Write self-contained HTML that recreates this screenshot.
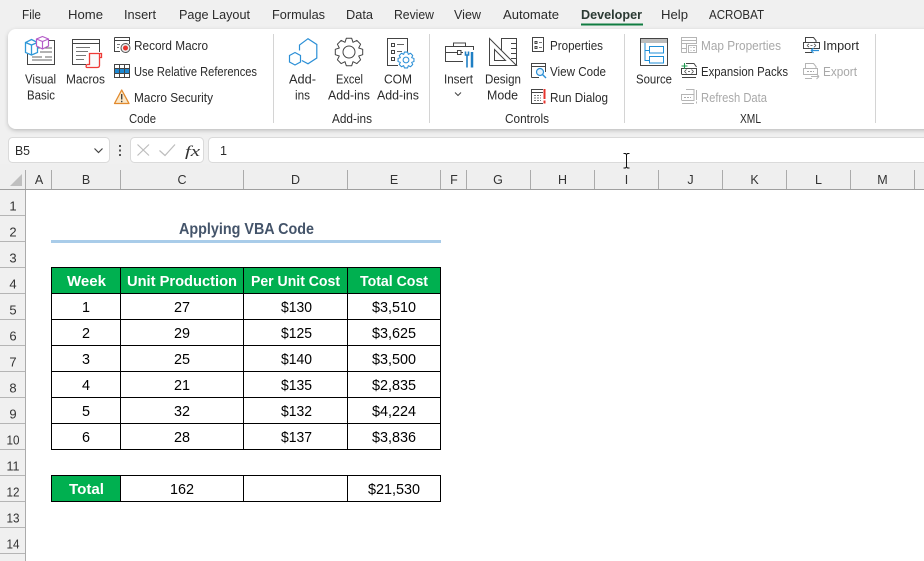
<!DOCTYPE html>
<html><head><meta charset="utf-8"><style>
html,body{margin:0;padding:0;background:#f0f0f0;width:924px;height:561px;overflow:hidden}
svg{display:block}
text{font-family:"Liberation Sans",sans-serif;font-size:12.5px;fill:#2b2b2b}
.g{fill:#a8a8a8}
.h{font-size:12.5px;fill:#333;text-anchor:middle}
.r{font-size:13px;fill:#333;text-anchor:middle}
.t{font-size:15px;fill:#000}
.b{font-size:14.5px;font-weight:bold;fill:#fff}
.i{fill:none;stroke:#444;stroke-width:1}
.l{fill:none;stroke:#444;stroke-width:1}
.bl{fill:none;stroke:#2b8fd6;stroke-width:1.2}
.gr{fill:none;stroke:#b5b5b5;stroke-width:1}
</style></head><body>
<svg width="924" height="561" viewBox="0 0 924 561" xmlns="http://www.w3.org/2000/svg">
<defs><filter id="s" x="-2%" y="-10%" width="104%" height="125%"><feDropShadow dx="0" dy="1.5" stdDeviation="2" flood-color="#000" flood-opacity=".22"/></filter></defs>
<rect width="924" height="561" fill="#f0f0f0"/>

<!-- tabs -->
<g>
<text x="22" y="19" textLength="19" lengthAdjust="spacingAndGlyphs">File</text>
<text x="68" y="19" textLength="35" lengthAdjust="spacingAndGlyphs">Home</text>
<text x="124" y="19" textLength="32" lengthAdjust="spacingAndGlyphs">Insert</text>
<text x="179" y="19" textLength="71" lengthAdjust="spacingAndGlyphs">Page Layout</text>
<text x="272" y="19" textLength="53" lengthAdjust="spacingAndGlyphs">Formulas</text>
<text x="346" y="19" textLength="27" lengthAdjust="spacingAndGlyphs">Data</text>
<text x="394" y="19" textLength="40" lengthAdjust="spacingAndGlyphs">Review</text>
<text x="454" y="19" textLength="27" lengthAdjust="spacingAndGlyphs">View</text>
<text x="503" y="19" textLength="56" lengthAdjust="spacingAndGlyphs">Automate</text>
<text x="581" y="19" textLength="61" lengthAdjust="spacingAndGlyphs" style="font-weight:bold;fill:#2b3a33">Developer</text>
<text x="661" y="19" textLength="27" lengthAdjust="spacingAndGlyphs">Help</text>
<text x="709" y="19" textLength="55" lengthAdjust="spacingAndGlyphs">ACROBAT</text>
</g>
<rect x="581" y="23.5" width="62" height="2" fill="#107c41"/>

<!-- ribbon -->
<path d="M934 29H16a8 8 0 0 0-8 8v84a8 8 0 0 0 8 8H934z" fill="#fff" filter="url(#s)"/>
<g fill="#d4d4d4">
<rect x="273" y="34" width="1" height="89"/><rect x="429" y="34" width="1" height="89"/><rect x="624" y="34" width="1" height="89"/><rect x="875" y="34" width="1" height="89"/>
</g>

<!-- Ribbon labels -->
<text x="25" y="83.500" textLength="31" lengthAdjust="spacingAndGlyphs">Visual</text>
<text x="27" y="99.500" textLength="28" lengthAdjust="spacingAndGlyphs">Basic</text>
<text x="66" y="83.500" textLength="39" lengthAdjust="spacingAndGlyphs">Macros</text>
<text x="134" y="50" textLength="74" lengthAdjust="spacingAndGlyphs">Record Macro</text>
<text x="134" y="76" textLength="123" lengthAdjust="spacingAndGlyphs">Use Relative References</text>
<text x="134" y="102" textLength="79" lengthAdjust="spacingAndGlyphs">Macro Security</text>
<text x="129" y="123" textLength="27" lengthAdjust="spacingAndGlyphs">Code</text>
<text x="289" y="83.500" textLength="27" lengthAdjust="spacingAndGlyphs">Add-</text>
<text x="295" y="99.500" textLength="15" lengthAdjust="spacingAndGlyphs">ins</text>
<text x="336" y="83.500" textLength="27" lengthAdjust="spacingAndGlyphs">Excel</text>
<text x="328" y="99.500" textLength="42" lengthAdjust="spacingAndGlyphs">Add-ins</text>
<text x="384" y="83.500" textLength="28" lengthAdjust="spacingAndGlyphs">COM</text>
<text x="377" y="99.500" textLength="42" lengthAdjust="spacingAndGlyphs">Add-ins</text>
<text x="332" y="123" textLength="40" lengthAdjust="spacingAndGlyphs">Add-ins</text>
<text x="444" y="83.500" textLength="29" lengthAdjust="spacingAndGlyphs">Insert</text>
<text x="485" y="83.500" textLength="36" lengthAdjust="spacingAndGlyphs">Design</text>
<text x="487" y="99.500" textLength="31" lengthAdjust="spacingAndGlyphs">Mode</text>
<text x="550" y="50" textLength="53" lengthAdjust="spacingAndGlyphs">Properties</text>
<text x="550" y="76" textLength="56" lengthAdjust="spacingAndGlyphs">View Code</text>
<text x="550" y="102" textLength="58" lengthAdjust="spacingAndGlyphs">Run Dialog</text>
<text x="505" y="123" textLength="44" lengthAdjust="spacingAndGlyphs">Controls</text>
<text x="636" y="83.500" textLength="36" lengthAdjust="spacingAndGlyphs">Source</text>
<text class="g" x="701" y="50" textLength="80" lengthAdjust="spacingAndGlyphs">Map Properties</text>
<text x="701" y="76" textLength="87" lengthAdjust="spacingAndGlyphs">Expansion Packs</text>
<text class="g" x="701" y="102" textLength="66" lengthAdjust="spacingAndGlyphs">Refresh Data</text>
<text x="823" y="50" textLength="36" lengthAdjust="spacingAndGlyphs">Import</text>
<text class="g" x="823" y="76" textLength="34" lengthAdjust="spacingAndGlyphs">Export</text>
<text x="740" y="123" textLength="21" lengthAdjust="spacingAndGlyphs">XML</text>

<!-- Visual Basic icon -->
<path class="l" d="M44.500 40.500H54.500V64.500H27.500V54" />
<path d="M38 48H52M40 52H52M32 57H42M45 57H52M32 60H52" stroke="#666" stroke-width="1" fill="none"/>
<g fill="#fff" stroke="#2f98d8" stroke-width="1.3"><path d="M31.500 39.500L37.500 42.500V52.500L31.500 55L25.500 52.500V42.500Z"/><path fill="none" d="M25.500 42.500L31.500 45L37.500 42.500M31.500 45V55"/></g>
<g fill="#fff" stroke="#b45cc8" stroke-width="1.2"><path d="M42.500 36.500L48.500 39V46L42.500 49L36.500 46V39Z"/><path fill="none" d="M36.500 39L42.500 41.500L48.500 39M42.500 41.500V49"/></g>

<!-- Macros icon -->
<path class="l" d="M86 64.500H72.500V39.500H99.500V52M72.500 43.500H99.500"/>
<path d="M76 47.500H90M76 51.500H88M76 55.500H86M76 59.500H84" stroke="#777" fill="none"/>
<path d="M89.500 53.500H99.500V65.500C99.500 67 98.500 67.500 97 67.500H87C85.500 67.500 86 64.500 87.500 64.500H89.500ZM99.500 53.500H101.500V57.500H99.500" fill="#fafafa" stroke="#ee3a36" stroke-width="1.3"/>

<!-- Record macro -->
<path class="l" d="M114.500 37.500H129.500V44M114.500 40.500H129.500M114.500 37.500V51.500H120"/>
<path d="M117 44.500H120M117 47.500H119" stroke="#777"/>
<circle cx="125.500" cy="48" r="4.500" fill="#eee" stroke="#555"/>
<circle cx="125.500" cy="48" r="2.500" fill="#e8352e"/>

<!-- Relative references -->
<rect x="114.500" y="64.500" width="15" height="13" fill="#fff" stroke="#444"/>
<rect x="115" y="68.500" width="14" height="4.500" fill="#1e88d0"/>
<path d="M114.500 68.500H129.500M114.500 73.500H129.500M119.500 64.500V77.500M124.500 64.500V77.500" stroke="#444" fill="none"/>

<!-- Warning -->
<path d="M121.700 90L129 103.500H114.500Z" fill="#fbe8c8" stroke="#e28a2e" stroke-width="1.3" stroke-linejoin="round"/>
<path d="M121.700 94V99.500M121.700 100.700V102.300" stroke="#444" stroke-width="1.4"/>

<!-- Add-ins -->
<path d="M299.500 50.500V45L308 38.700L316.800 44.500V58L308 63.800L301.800 60.500" fill="none" stroke="#2b8fd6" stroke-width="1.2"/>
<path d="M295 52.500L300.500 55.500V62L295 65L289.500 62V55.500Z" fill="none" stroke="#2b8fd6" stroke-width="1.2"/>

<!-- Gear -->
<g transform="translate(349 52)"><polygon class="l" stroke-linejoin="round" points="13.700,-2.700 13.700,2.700 9.700,4 11.600,7.800 7.800,11.600 4,9.700 2.700,13.700 -2.700,13.700 -4,9.700 -7.800,11.600 -11.600,7.800 -9.700,4 -13.700,2.700 -13.700,-2.700 -9.700,-4 -11.600,-7.800 -7.800,-11.600 -4,-9.700 -2.700,-13.700 2.700,-13.700 4,-9.700 7.800,-11.600 11.600,-7.800 9.700,-4"/><circle r="6" class="l"/></g>

<!-- COM -->
<path class="l" d="M398 65.500H387.500V38.500H407.500V52"/>
<path d="M391.500 43.500h3v3h-3zM391.500 50.500h3v3h-3zM391.500 57.500h3v3h-3z" class="l" stroke="#666"/>
<path d="M397 44.500H404M397 51.500H402" stroke="#666" fill="none"/>
<g transform="translate(406 60) scale(.58)"><polygon fill="#fff" stroke="#2b8fd6" stroke-width="1.8" stroke-linejoin="round" points="13.700,-2.700 13.700,2.700 9.700,4 11.600,7.800 7.800,11.600 4,9.700 2.700,13.700 -2.700,13.700 -4,9.700 -7.800,11.600 -11.600,7.800 -9.700,4 -13.700,2.700 -13.700,-2.700 -9.700,-4 -11.600,-7.800 -7.800,-11.600 -4,-9.700 -2.700,-13.700 2.700,-13.700 4,-9.700 7.800,-11.600 11.600,-7.800 9.700,-4"/><circle r="5" fill="none" stroke="#2b8fd6" stroke-width="1.8"/></g>

<!-- Insert toolbox -->
<path class="l" d="M463 61.500H445.500V46.500H473.500V50M445.500 52.500H457M461 52.500H463M453.500 46.500V43H465.500V46.500"/>
<rect x="457.500" y="50.500" width="3.500" height="4" class="l"/>
<path d="M465.500 51.500V55H468.500V51.500M467 55V67.500" stroke="#1f7fc4" stroke-width="1.6" fill="none"/>
<path d="M472 52V67.500" stroke="#1f7fc4" stroke-width="2.500" fill="none"/>
<path d="M455 92.500L458 95.500L461 92.500" fill="none" stroke="#444"/>

<!-- Design mode -->
<path class="l" stroke-width="1.2" d="M489.500 38.500L516.500 65.500H489.500ZM494.500 60.500H505.500L494.500 49.500Z"/>
<path class="l" d="M501.500 50V38.500H516.500V65M511 43.500H516.500M511 48.500H516.500M511 53.500H516.500M511 58.500H516.500"/>

<!-- Properties -->
<rect x="532.500" y="37.500" width="11" height="14" fill="#fff" stroke="#444"/>
<path d="M535 41.500h2v2h-2zM535 46.500h2v2h-2z" class="l" stroke="#777"/><path d="M539 42.500h3M539 47.500h3" stroke="#777"/>

<!-- View Code -->
<path class="l" d="M531.500 77.500V63.500H545.500V72M531.500 66.500H545.500M531.500 77.500H539"/>
<circle cx="540" cy="72" r="3.500" fill="#e6f3fc" stroke="#2b8fd6" stroke-width="1.200"/>
<path d="M542.500 74.500L546 78" stroke="#2b8fd6" stroke-width="1.400"/>

<!-- Run Dialog -->
<path class="l" d="M543 103.500H531.500V89.500H543M531.500 92.500H543"/>
<path d="M534 95.500H541M534 98H541M534 100.500H541" stroke="#777" stroke-dasharray="2 1"/>
<path d="M544.500 89V99M544.500 100.500V103.500" stroke="#e8352e" stroke-width="2"/>

<!-- Source -->
<rect x="640.500" y="38.500" width="27" height="27" fill="#fff" stroke="#444"/>
<rect x="641" y="39" width="26" height="4" fill="#bdbdbd"/>
<path d="M645 43V60.500H649M645 50.500H649" fill="none" stroke="#1f8fd8"/>
<rect x="649.500" y="46.500" width="14" height="6.500" fill="none" stroke="#1f8fd8"/>
<rect x="649.500" y="56.500" width="14" height="6.500" fill="none" stroke="#1f8fd8"/>

<!-- Map props -->
<path class="gr" d="M681.500 52.500V37.500H696.500V43.500H681.500M681.500 40.500H696.500M686.500 43.500V52.500H681.500M681.500 48.500H686.500M691 43.500V44"/>
<rect x="688.500" y="45.500" width="8" height="7" class="gr"/>
<path d="M690.500 47.500h1M693 47.500h2M690.500 50.500h1M693 50.500h2" stroke="#bbb"/>

<!-- Expansion -->
<path class="l" d="M686 63.500H694L696.500 67M681.500 74V68.500H696.500V74.500H681.500M682 77.500H696"/>
<path d="M684.500 71.500L686.500 69.500M684.500 71.500L686.500 73.500M693.500 71.500L691.500 69.500M693.500 71.500L691.500 73.500M688 71.500H690" stroke="#444" fill="none" stroke-width=".8"/>
<path d="M684.500 63V69M681.500 66H687.500" stroke="#1f9a50" stroke-width="1.100"/>

<!-- Refresh data -->
<path class="gr" d="M686 89.500H694V94M681.500 100V94.500H694V100.500H681.500M682 103.500H694M696.500 90V100M696.500 101.500V103.500"/>
<path d="M684 97.500h7" stroke="#aaa" stroke-dasharray="2 1"/>

<!-- Import -->
<path class="l" d="M805.500 42V37.500H813.500L816 40.500V42M803.500 42.500H819.500V48.500H803.500ZM805 52.500H812"/>
<path d="M807 45.500L809 43.800M807 45.500L809 47.200M816 45.500L814 43.800M816 45.500L814 47.200M810.500 45.500H812.500" stroke="#444" fill="none" stroke-width=".8"/>
<path d="M811 50.500H819M811 50.500L813.500 48M811 50.500L813.500 53" stroke="#2b8fd6" stroke-width="1.200" fill="none"/>

<!-- Export -->
<path class="gr" d="M805.500 68V63.500H813.500L816 66.500V68M803.500 68.500H817.500V74.500H803.500ZM805 78.500H812"/>
<path d="M807 71.500h7" stroke="#aaa" stroke-dasharray="2 1"/>
<path d="M811 76.500H819M819 76.500L816.500 74M819 76.500L816.500 79" stroke="#b5b5b5" fill="none"/>

<!-- Formula bar -->
<rect x="8.500" y="137.500" width="101" height="25" rx="4" fill="#fff" stroke="#dadada"/>
<text x="15" y="155" textLength="15" lengthAdjust="spacingAndGlyphs" style="font-size:13px">B5</text>
<path d="M94.500 148.500L98.500 152.500L102.500 148.500" fill="none" stroke="#444" stroke-width="1.200"/>
<g fill="#555"><rect x="119" y="145" width="2" height="2"/><rect x="119" y="149.500" width="2" height="2"/><rect x="119" y="154" width="2" height="2"/></g>
<rect x="130.500" y="137.500" width="73" height="25" rx="4" fill="#fff" stroke="#dadada"/>
<path d="M137.500 144.500L149 155.500M149 144.500L137.500 155.500" stroke="#bdbdbd" stroke-width="1.200" fill="none"/>
<path d="M159.500 150.500L165 155.500L175 144.500" stroke="#bdbdbd" stroke-width="1.200" fill="none"/>
<text x="185" y="156" textLength="15" lengthAdjust="spacingAndGlyphs" style="font-family:'Liberation Serif',serif;font-style:italic;font-size:15px;fill:#333">fx</text>
<rect x="208.500" y="137.500" width="730" height="25" rx="4" fill="#fff" stroke="#dadada"/>
<text x="220" y="155" textLength="7" lengthAdjust="spacingAndGlyphs" style="font-size:13px">1</text>

<!-- Grid area -->
<rect x="0" y="163.500" width="924" height="26" fill="#efefef"/>
<rect x="26" y="190" width="898" height="371" fill="#fff"/>
<path d="M22 174V186H10Z" fill="#bfbfbf"/>
<path d="M25.500 170V561M51.500 170V189M120.500 170V189M243.500 170V189M347.500 170V189M440.500 170V189M466.500 170V189M530.500 170V189M594.500 170V189M658.500 170V189M722.500 170V189M786.500 170V189M850.500 170V189M914.500 170V189" stroke="#ababab" fill="none"/>
<path d="M0 189.500H924" stroke="#9f9f9f" fill="none"/>
<path d="M0 215.500H25M0 241.500H25M0 267.500H25M0 293.500H25M0 319.500H25M0 345.500H25M0 371.500H25M0 397.500H25M0 423.500H25M0 449.500H25M0 475.500H25M0 501.500H25M0 527.500H25M0 553.500H25" stroke="#b5b5b5" fill="none"/>

<g>
<text class="h" x="39" y="184">A</text><text class="h" x="86" y="184">B</text><text class="h" x="182" y="184">C</text><text class="h" x="295.500" y="184">D</text><text class="h" x="394" y="184">E</text><text class="h" x="454" y="184">F</text><text class="h" x="498" y="184">G</text><text class="h" x="562.500" y="184">H</text><text class="h" x="626.500" y="184">I</text><text class="h" x="690.500" y="184">J</text><text class="h" x="754.500" y="184">K</text><text class="h" x="818.500" y="184">L</text><text class="h" x="882.500" y="184">M</text>
<text class="r" x="13" y="210.500">1</text><text class="r" x="13" y="236.500">2</text><text class="r" x="13" y="262.500">3</text><text class="r" x="13" y="288.500">4</text><text class="r" x="13" y="314.500">5</text><text class="r" x="13" y="340.500">6</text><text class="r" x="13" y="366.500">7</text><text class="r" x="13" y="392.500">8</text><text class="r" x="13" y="418.500">9</text><text class="r" x="13" y="444.500" textLength="13" lengthAdjust="spacingAndGlyphs">10</text><text class="r" x="13" y="470.500" textLength="13" lengthAdjust="spacingAndGlyphs">11</text><text class="r" x="13" y="496.500" textLength="13" lengthAdjust="spacingAndGlyphs">12</text><text class="r" x="13" y="522.500" textLength="13" lengthAdjust="spacingAndGlyphs">13</text><text class="r" x="13" y="548.500" textLength="13" lengthAdjust="spacingAndGlyphs">14</text>
</g>

<!-- Title -->
<text x="179" y="234" textLength="135" lengthAdjust="spacingAndGlyphs" style="font-size:16px;font-weight:bold;fill:#44546a">Applying VBA Code</text>
<rect x="51" y="240" width="390" height="3" fill="#a9cce9"/>

<!-- Table -->
<rect x="51" y="267" width="390" height="26" fill="#00b050"/>
<rect x="51" y="475" width="70" height="26" fill="#00b050"/>
<path d="M51.500 267V450M120.500 267V450M243.500 267V450M347.500 267V450M440.500 267V450M51 267.500H441M51 293.500H441M51 319.500H441M51 345.500H441M51 371.500H441M51 397.500H441M51 423.500H441M51 449.500H441" stroke="#000" fill="none"/>
<path d="M51.500 475V502M120.500 475V502M243.500 475V502M347.500 475V502M440.500 475V502M51 475.500H441M51 501.500H441" stroke="#000" fill="none"/>

<text class="b" x="67" y="286" textLength="39" lengthAdjust="spacingAndGlyphs">Week</text>
<text class="b" x="127" y="286" textLength="110" lengthAdjust="spacingAndGlyphs">Unit Production</text>
<text class="b" x="251" y="286" textLength="89" lengthAdjust="spacingAndGlyphs">Per Unit Cost</text>
<text class="b" x="360" y="286" textLength="68" lengthAdjust="spacingAndGlyphs">Total Cost</text>

<g>
<text class="t" x="82" y="312" textLength="8" lengthAdjust="spacingAndGlyphs">1</text><text class="t" x="174" y="312" textLength="16" lengthAdjust="spacingAndGlyphs">27</text><text class="t" x="281" y="312" textLength="31" lengthAdjust="spacingAndGlyphs">$130</text><text class="t" x="372" y="312" textLength="44" lengthAdjust="spacingAndGlyphs">$3,510</text>
<text class="t" x="82" y="338" textLength="8" lengthAdjust="spacingAndGlyphs">2</text><text class="t" x="174" y="338" textLength="16" lengthAdjust="spacingAndGlyphs">29</text><text class="t" x="281" y="338" textLength="31" lengthAdjust="spacingAndGlyphs">$125</text><text class="t" x="372" y="338" textLength="44" lengthAdjust="spacingAndGlyphs">$3,625</text>
<text class="t" x="82" y="364" textLength="8" lengthAdjust="spacingAndGlyphs">3</text><text class="t" x="174" y="364" textLength="16" lengthAdjust="spacingAndGlyphs">25</text><text class="t" x="281" y="364" textLength="31" lengthAdjust="spacingAndGlyphs">$140</text><text class="t" x="372" y="364" textLength="44" lengthAdjust="spacingAndGlyphs">$3,500</text>
<text class="t" x="82" y="390" textLength="8" lengthAdjust="spacingAndGlyphs">4</text><text class="t" x="174" y="390" textLength="16" lengthAdjust="spacingAndGlyphs">21</text><text class="t" x="281" y="390" textLength="31" lengthAdjust="spacingAndGlyphs">$135</text><text class="t" x="372" y="390" textLength="44" lengthAdjust="spacingAndGlyphs">$2,835</text>
<text class="t" x="82" y="416" textLength="8" lengthAdjust="spacingAndGlyphs">5</text><text class="t" x="174" y="416" textLength="16" lengthAdjust="spacingAndGlyphs">32</text><text class="t" x="281" y="416" textLength="31" lengthAdjust="spacingAndGlyphs">$132</text><text class="t" x="372" y="416" textLength="44" lengthAdjust="spacingAndGlyphs">$4,224</text>
<text class="t" x="82" y="442" textLength="8" lengthAdjust="spacingAndGlyphs">6</text><text class="t" x="174" y="442" textLength="16" lengthAdjust="spacingAndGlyphs">28</text><text class="t" x="281" y="442" textLength="31" lengthAdjust="spacingAndGlyphs">$137</text><text class="t" x="372" y="442" textLength="44" lengthAdjust="spacingAndGlyphs">$3,836</text>
<text class="b" x="69" y="494" textLength="35" lengthAdjust="spacingAndGlyphs">Total</text>
<text class="t" x="170" y="494" textLength="24" lengthAdjust="spacingAndGlyphs">162</text>
<text class="t" x="368" y="494" textLength="52" lengthAdjust="spacingAndGlyphs">$21,530</text>
</g>

<!-- I-beam cursor -->
<path d="M623.500 153.500H625.500L626.500 154.500L627.500 153.500H629.500M626.500 154.500V167M623.500 168H625.500L626.500 167L627.500 168H629.500" stroke="#111" fill="none"/>
</svg>
</body></html>
